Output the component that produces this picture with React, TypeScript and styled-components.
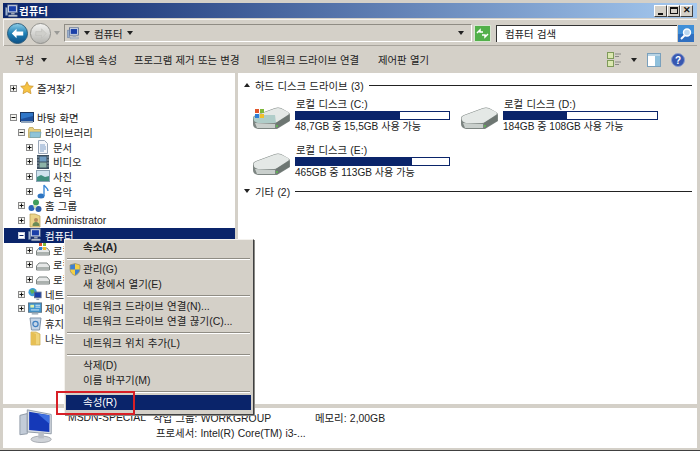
import React from 'react';
import styled, { createGlobalStyle } from 'styled-components';

const GlobalStyle = createGlobalStyle`
    html, body {
        margin: 0;
        padding: 0;
        background: #d4d0c8;
    }
    * {
        box-sizing: border-box;
    }
`;

const FONT = `"Liberation Sans", "Noto Sans CJK KR", sans-serif`;

/* ---------- icons ---------- */

const Expander = ({ open, dark }: { open?: boolean; dark?: boolean }) => (
    <svg width='7' height='7' viewBox='0 0 7 7'>
        <rect x='.5' y='.5' width='6' height='6' fill={dark ? '#fff' : '#f4f4f0'} stroke={dark ? '#c8cde0' : '#8a8a8a'} />
        <path d={open ? 'M1.5 3.5h4' : 'M1.5 3.5h4M3.500 1.500v4'} stroke={dark ? '#0a246a' : '#111'} />
    </svg>
);

const Monitor = ({ size = 16 }: { size?: number }) => (
    <svg width={size} height={size} viewBox='0 0 16 16'>
        <rect x='3' y='1' width='11' height='9' fill='#dfe6f2' stroke='#56688c' />
        <rect x='4.5' y='2.5' width='8' height='6' fill='#1a3fa8' />
        <path d='M7 10h4v2H7z' fill='#9aa6b8' />
        <path d='M4 12.5h10v2H4z' fill='#c3cbd8' stroke='#7d8799' strokeWidth='.5' />
        <path d='M.5 4h2.500v9H.5z' fill='#9db2d0' stroke='#58709a' strokeWidth='.6' />
    </svg>
);

const Star = () => (
    <svg width='14' height='14' viewBox='0 0 14 14'>
        <path d='M7 .8l1.900 4 4.400.5-3.200 3 .9 4.400L7 10.500l-4 2.200.9-4.400-3.200-3 4.400-.5z' fill='#f6c343' stroke='#c8912a' strokeWidth='.7' />
    </svg>
);

const Desktop = () => (
    <svg width='14' height='13' viewBox='0 0 14 13'>
        <rect x='.5' y='1.5' width='13' height='9' fill='#1d4f9c' stroke='#1b3560' />
        <path d='M1 2h12v3L1 8z' fill='#2f76c8' />
        <rect x='1' y='10' width='12' height='2' fill='#8fa3bb' />
    </svg>
);

const LibraryIcon = () => (
    <svg width='14' height='13' viewBox='0 0 14 13'>
        <path d='M.5 3.500v8h12v-8H6L5 1.500H1.500z' fill='#e8cf7e' stroke='#b39a4a' strokeWidth='.7' />
        <path d='M2 6h11l-1 5.500H2z' fill='#8fc4d8' stroke='#6a9db5' strokeWidth='.6' />
    </svg>
);

const DocIcon = () => (
    <svg width='12' height='14' viewBox='0 0 12 14'>
        <path d='M1.500.5h6l3 3v10h-9z' fill='#f4f6fa' stroke='#9aa7b8' />
        <path d='M3 5h5M3 7h6M3 9h6M3 11h4' stroke='#7f9fc9' />
    </svg>
);

const VideoIcon = () => (
    <svg width='12' height='14' viewBox='0 0 12 14'>
        <rect width='12' height='14' fill='#3d4f5f' />
        <rect x='2.5' y='1.5' width='7' height='5' fill='#6f9cc2' />
        <rect x='2.5' y='7.5' width='7' height='5' fill='#8db3a8' />
        <path d='M.5 2h1M.5 5h1M.5 8h1M.5 11h1M10.500 2h1M10.500 5h1M10.500 8h1M10.500 11h1' stroke='#dfe6ee' />
    </svg>
);

const PhotoIcon = () => (
    <svg width='14' height='12' viewBox='0 0 14 12'>
        <rect x='.5' y='.5' width='13' height='11' fill='#cfe3ef' stroke='#8ba3b5' />
        <path d='M1 7l4-2 4 2 4-1v5H1z' fill='#3f8f7f' />
    </svg>
);

const MusicIcon = () => (
    <svg width='12' height='15' viewBox='0 0 12 15'>
        <ellipse cx='4' cy='12' rx='3.5' ry='2.5' fill='#2e74c0' />
        <path d='M7 12V1c1 2 4 3 4 6' fill='none' stroke='#3e8ad8' strokeWidth='1.4' />
    </svg>
);

const HomeGroupIcon = () => (
    <svg width='14' height='14' viewBox='0 0 14 14'>
        <circle cx='8' cy='3.5' r='3' fill='#3f9e5c' />
        <circle cx='3.5' cy='9' r='3' fill='#2d66b8' />
        <circle cx='10.5' cy='10' r='3' fill='#2f5fa8' />
        <circle cx='7' cy='7.5' r='1.5' fill='#cfe3a8' />
    </svg>
);

const UserFolder = () => (
    <svg width='13' height='15' viewBox='0 0 13 15'>
        <path d='M1 1h5l5 2v11H1z' fill='#ecd48a' stroke='#b79c52' strokeWidth='.7' />
        <circle cx='7' cy='7' r='2' fill='#b88a5e' />
        <path d='M3.500 13c0-3 1.500-4 3.500-4s3.500 1 3.500 4z' fill='#6b8a56' />
    </svg>
);

const WinFlag = ({ x, y, s }: { x: number; y: number; s: number }) => (
    <g>
        <rect x={x} y={y} width={s} height={s} fill='#e2552b' />
        <rect x={x + s + 1} y={y} width={s} height={s} fill='#7fb83a' />
        <rect x={x} y={y + s + 1} width={s} height={s} fill='#2f7fd6' />
        <rect x={x + s + 1} y={y + s + 1} width={s} height={s} fill='#f0c02c' />
    </g>
);

const Drive = ({ windows }: { windows?: boolean }) => (
    <svg width='42' height='27' viewBox='0 0 42 27'>
        {/* top face, front face, dark right end */}
        <path d='M3 15 Q3 13 6 12 L25 5 Q28 4 31 5 L38 9 Q40 10 40 12 L40 18 L27 26 L8 26 Q3 25 3 21z' fill='#7d8582' />
        <path d='M3.500 15 Q3.500 13.500 6 12.500 L25 5.500 Q28 4.500 31 5.500 L38 9 Q39.500 10 38.500 11.500 L27 19 Q26 20 24 20 L8 20 Q3.500 19 3.500 15z' fill='#e4e8e6' />
        <path d='M5 20 L25 21 L25 25 L7 25z' fill='#c9cfcc' />
        <path d='M26 20 L39 12 L39 18 L27 25z' fill='#6d7672' />
        <circle cx='27' cy='23' r='1' fill='#5ac24a' />
        {windows && (
            <g>
                <path d='M3 15 Q3 13 6 12 L25 12 L26 20 L8 20 Q3 19 3 15z' fill='#4f9a93' opacity='.35' />
                <WinFlag x={5} y={6} s={4} />
            </g>
        )}
    </svg>
);

const SmallDrive = ({ windows }: { windows?: boolean }) => (
    <svg width='14' height='14' viewBox='0 0 14 14'>
        <path d='M.5 8L3 5h8l2.500 3v4h-13z' fill='#e6e8e8' stroke='#7d8482' />
        <path d='M1 9h12v2.500H1z' fill='#aab1ae' />
        {windows && <WinFlag x={3} y={0} s={3} />}
    </svg>
);

const NetworkIcon = () => (
    <svg width='15' height='14' viewBox='0 0 15 14'>
        <circle cx='5' cy='5' r='4.5' fill='#3f9ed6' />
        <path d='M2 3l4-1 1 3-3 2z' fill='#5db05a' />
        <rect x='7' y='5' width='7' height='6' fill='#1a3fa8' stroke='#56688c' />
        <path d='M9 12h3v1.500H9z' fill='#8b97aa' />
    </svg>
);

const ControlPanelIcon = () => (
    <svg width='15' height='14' viewBox='0 0 15 14'>
        <rect x='.5' y='.5' width='14' height='10' fill='#3f95d0' stroke='#5a7488' />
        <rect x='2.5' y='2.5' width='4' height='3' fill='#dff0a8' />
        <path d='M8 3h5M8 5h5M3 8h9' stroke='#dfeef8' />
        <rect x='4' y='11' width='7' height='2' fill='#a5b3c0' />
    </svg>
);

const RecycleIcon = () => (
    <svg width='13' height='15' viewBox='0 0 13 15'>
        <path d='M1 2h11l-1.500 12h-8z' fill='#c6d6e8' stroke='#7f93aa' />
        <circle cx='6.5' cy='8' r='2.6' fill='none' stroke='#3f7fc0' strokeWidth='1.2' />
    </svg>
);

const FolderIcon = () => (
    <svg width='11' height='15' viewBox='0 0 11 15'>
        <path d='M1 1h5l4 2v11H1z' fill='#f0d47a' stroke='#c5a548' strokeWidth='.7' />
        <path d='M1 1l5 2v11H1z' fill='#e6bf55' />
    </svg>
);

const BackIcon = () => (
    <svg width='21' height='21' viewBox='0 0 22 22'>
        <defs>
            <linearGradient id='backFill' x1='0' y1='0' x2='0' y2='1'>
                <stop offset='0' stopColor='#8fd0ea' />
                <stop offset='.5' stopColor='#1f7fb4' />
                <stop offset='1' stopColor='#0c4f86' />
            </linearGradient>
        </defs>
        <circle cx='11' cy='11' r='10.5' fill='url(#backFill)' stroke='#2c5a78' />
        <path d='M5 11l5-5v3h7v4h-7v3z' fill='#fff' />
    </svg>
);

const ForwardIcon = () => (
    <svg width='21' height='21' viewBox='0 0 22 22'>
        <defs>
            <linearGradient id='fwdFill' x1='0' y1='0' x2='0' y2='1'>
                <stop offset='0' stopColor='#f4f4f2' />
                <stop offset='1' stopColor='#b4b4b0' />
            </linearGradient>
        </defs>
        <circle cx='11' cy='11' r='10.5' fill='url(#fwdFill)' stroke='#8f8f8b' />
        <path d='M17 11l-5-5v3H6v4h6v3z' fill='#cfcfcb' stroke='#b9b9b5' strokeWidth='.5' />
    </svg>
);

const Caret = ({ color = '#222', up }: { color?: string; up?: boolean }) => (
    <svg width='6' height='4' viewBox='0 0 6 4'>
        <path d={up ? 'M0 4h6L3 0z' : 'M0 0h6L3 4z'} fill={color} />
    </svg>
);

const RefreshIcon = () => (
    <svg width='17' height='17' viewBox='0 0 17 17'>
        <rect x='.5' y='.5' width='16' height='16' fill='#52b04a' stroke='#d7e6d0' />
        <path d='M3 8l3-3v2h3M14 9l-3 3v-2H8' fill='none' stroke='#fff' strokeWidth='1.5' />
    </svg>
);

const SearchIcon = () => (
    <svg width='16' height='17' viewBox='0 0 16 17'>
        <rect width='16' height='17' fill='#3f8fd8' />
        <rect y='9' width='16' height='8' fill='#2f6fc0' />
        <circle cx='9' cy='7.5' r='3.5' fill='#bcd8f0' stroke='#fff' strokeWidth='1.4' />
        <path d='M6.500 10.500L3 14' stroke='#fff' strokeWidth='2' />
    </svg>
);

const ViewsIcon = () => (
    <svg width='14' height='15' viewBox='0 0 14 15'>
        <rect x='.5' y='.5' width='6' height='6' fill='#dbe8b0' stroke='#7e9a5a' />
        <rect x='.5' y='8.5' width='6' height='6' fill='#dbe8b0' stroke='#7e9a5a' />
        <path d='M8 2h6M8 4.500h4M8 10h6M8 12.500h4' stroke='#8a8a86' />
    </svg>
);

const PaneIcon = () => (
    <svg width='14' height='14' viewBox='0 0 14 14'>
        <rect x='.5' y='.5' width='13' height='13' fill='#fff' stroke='#7aa0bc' />
        <rect x='8' y='1' width='5' height='12' fill='#8fc0dc' />
        <rect x='1' y='1' width='12' height='2' fill='#b7d3e4' />
    </svg>
);

const HelpIcon = () => (
    <svg width='14' height='14' viewBox='0 0 14 14'>
        <circle cx='7' cy='7' r='6.5' fill='#3757b0' stroke='#8a9ccc' />
        <text x='7' y='10.5' textAnchor='middle' fontSize='10' fontWeight='700' fontFamily='Liberation Sans' fill='#fff'>?</text>
    </svg>
);

const ShieldIcon = () => (
    <svg width='12' height='13' viewBox='0 0 12 13'>
        <path d='M6 .5l5 1.500v4c0 3-2 5.500-5 6.500-3-1-5-3.500-5-6.500V2z' fill='#f3cf45' stroke='#8a7f5a' strokeWidth='.6' />
        <path d='M6 1v5.500H1.200V2zM6 6.500h4.800C10.500 9 8.500 11.300 6 12.300z' fill='#3f7fd0' />
    </svg>
);

const PcIcon = () => (
    <svg width='35' height='35' viewBox='0 0 38 38'>
        <path d='M1 8l8-2v22l-8 1z' fill='#c3ccd8' stroke='#8d97a5' />
        <path d='M9 2l26 5v21L9 26z' fill='#d8dde4' stroke='#8d97a5' />
        <path d='M11 4l22 4v18L11 24z' fill='#1539b8' />
        <path d='M20 6l13 2v9z' fill='#3d6fe0' />
        <ellipse cx='24' cy='34' rx='11' ry='3.5' fill='#cfd3d8' stroke='#a3a8ae' />
        <path d='M21 26h6v7h-6z' fill='#b9bec5' />
    </svg>
);

/* ---------- data ---------- */

interface TreeNode {
    label: string;
    depth: number;
    icon: React.ReactNode;
    toggle?: 'open' | 'closed';
    selected?: boolean;
}

const TREE: TreeNode[] = [
    { label: '바탕 화면', depth: 0, icon: <Desktop />, toggle: 'open' },
    { label: '라이브러리', depth: 1, icon: <LibraryIcon />, toggle: 'open' },
    { label: '문서', depth: 2, icon: <DocIcon />, toggle: 'closed' },
    { label: '비디오', depth: 2, icon: <VideoIcon />, toggle: 'closed' },
    { label: '사진', depth: 2, icon: <PhotoIcon />, toggle: 'closed' },
    { label: '음악', depth: 2, icon: <MusicIcon />, toggle: 'closed' },
    { label: '홈 그룹', depth: 1, icon: <HomeGroupIcon />, toggle: 'closed' },
    { label: 'Administrator', depth: 1, icon: <UserFolder />, toggle: 'closed' },
    { label: '컴퓨터', depth: 1, icon: <Monitor />, toggle: 'open', selected: true },
    { label: '로컬 디스크 (C:)', depth: 2, icon: <SmallDrive windows />, toggle: 'closed' },
    { label: '로컬 디스크 (D:)', depth: 2, icon: <SmallDrive />, toggle: 'closed' },
    { label: '로컬 디스크 (E:)', depth: 2, icon: <SmallDrive />, toggle: 'closed' },
    { label: '네트워크', depth: 1, icon: <NetworkIcon />, toggle: 'closed' },
    { label: '제어판', depth: 1, icon: <ControlPanelIcon />, toggle: 'closed' },
    { label: '휴지통', depth: 1, icon: <RecycleIcon /> },
    { label: '나는', depth: 1, icon: <FolderIcon /> },
];

const DRIVES = [
    { name: '로컬 디스크 (C:)', used: 68, free: '48,7GB 중 15,5GB 사용 가능', windows: true },
    { name: '로컬 디스크 (D:)', used: 41, free: '184GB 중 108GB 사용 가능', windows: false },
    { name: '로컬 디스크 (E:)', used: 76, free: '465GB 중 113GB 사용 가능', windows: false },
];

/* ---------- page ---------- */

export default function App() {
    return (
        <Window>
            <GlobalStyle />
            <TitleBar>
                <Monitor size={14} />
                <TitleText>컴퓨터</TitleText>
                <WindowButtons>
                    <WindowButton><Glyph $kind='min' /></WindowButton>
                    <WindowButton><Glyph $kind='max' /></WindowButton>
                    <WindowButton><CloseGlyph>✕</CloseGlyph></WindowButton>
                </WindowButtons>
            </TitleBar>

            <AddressRow>
                <NavButtons>
                    <BackIcon />
                    <ForwardIcon />
                    <NavCaret><Caret color='#9a9a96' /></NavCaret>
                </NavButtons>
                <AddressField>
                    <Monitor size={13} />
                    <Caret />
                    <span>컴퓨터</span>
                    <Caret />
                    <AddressEnd><Caret /></AddressEnd>
                </AddressField>
                <RefreshIcon />
                <SearchBox>
                    <SearchInput>컴퓨터 검색</SearchInput>
                    <SearchIcon />
                </SearchBox>
            </AddressRow>

            <CommandBar>
                <Command $width={51}>구성 <Caret /></Command>
                <Command $width={68}>시스템 속성</Command>
                <Command $width={123}>프로그램 제거 또는 변경</Command>
                <Command $width={121}>네트워크 드라이브 연결</Command>
                <Command $width={70}>제어판 열기</Command>
                <CommandTools>
                    <ViewsIcon />
                    <Caret />
                    <PaneIcon />
                    <HelpIcon />
                </CommandTools>
            </CommandBar>

            <Body>
                <NavPane>
                    <TreeRow $depth={0} $gapAfter>
                        <ToggleSlot><Expander /></ToggleSlot>
                        <TreeIcon><Star /></TreeIcon>
                        <TreeLabel>즐겨찾기</TreeLabel>
                    </TreeRow>
                    {TREE.map((node) => (
                        <TreeRow key={node.label} $depth={node.depth} $selected={node.selected}>
                            <ToggleSlot>
                                {node.toggle && <Expander open={node.toggle === 'open'} dark={node.selected} />}
                            </ToggleSlot>
                            <TreeIcon>{node.icon}</TreeIcon>
                            <TreeLabel>{node.label}</TreeLabel>
                        </TreeRow>
                    ))}
                </NavPane>
                <Splitter />
                <Content>
                    <GroupHeader>
                        <Caret up />
                        <span>하드 디스크 드라이브 (3)</span>
                        <GroupLine />
                    </GroupHeader>
                    <DriveGrid>
                        {DRIVES.map((drive) => (
                            <DriveItem key={drive.name}>
                                <DriveIcon><Drive windows={drive.windows} /></DriveIcon>
                                <DriveInfo>
                                    <DriveName>{drive.name}</DriveName>
                                    <UsageBar>
                                        <UsageFill style={{ width: `${drive.used}%` }} />
                                    </UsageBar>
                                    <DriveFree>{drive.free}</DriveFree>
                                </DriveInfo>
                            </DriveItem>
                        ))}
                    </DriveGrid>
                    <GroupHeader $tight>
                        <Caret />
                        <span>기타 (2)</span>
                        <GroupLine />
                    </GroupHeader>
                </Content>
            </Body>

            <DetailsPane>
                <PcIcon />
                <DetailsGrid>
                    <span>MSDN-SPECIAL</span>
                    <span>작업 그룹: WORKGROUP</span>
                    <span>메모리: 2,00GB</span>
                    <span />
                    <ProcessorText>프로세서: Intel(R) Core(TM) i3-...</ProcessorText>
                </DetailsGrid>
            </DetailsPane>

            <ContextMenu>
                <MenuItem $bold>속소(A)</MenuItem>
                <MenuSeparator />
                <MenuItem>
                    <MenuIcon><ShieldIcon /></MenuIcon>
                    관리(G)
                </MenuItem>
                <MenuItem>새 창에서 열기(E)</MenuItem>
                <MenuSeparator />
                <MenuItem>네트워크 드라이브 연결(N)...</MenuItem>
                <MenuItem>네트워크 드라이브 연결 끊기(C)...</MenuItem>
                <MenuSeparator />
                <MenuItem>네트워크 위치 추가(L)</MenuItem>
                <MenuSeparator />
                <MenuItem>삭제(D)</MenuItem>
                <MenuItem>이름 바꾸기(M)</MenuItem>
                <MenuSeparator />
                <MenuItem $active>속성(R)</MenuItem>
            </ContextMenu>
            <Highlight />
        </Window>
    );
}

/* ---------- styles ---------- */

const Window = styled.div`
    position: relative;
    width: 700px;
    height: 451px;
    display: flex;
    flex-direction: column;
    padding: 3px 3px 2px;
    overflow: hidden;
    background: #d4d0c8;
    border-bottom: 1px solid #404040;
    font-family: ${FONT};
    font-size: 10.4px;
    word-spacing: 0.4px;
    color: #222;
`;

const TitleBar = styled.div`
    height: 15px;
    flex: none;
    display: flex;
    align-items: center;
    padding: 0 4px 0 2px;
    background: linear-gradient(90deg, #0a246a, #a6caf0);
`;

const TitleText = styled.span`
    color: #fff;
    font-weight: 700;
    font-size: 10.5px;
`;

const WindowButtons = styled.div`
    margin-left: auto;
    display: flex;
`;

const WindowButton = styled.div`
    width: 13px;
    height: 12px;
    display: flex;
    align-items: center;
    justify-content: center;
    background: #d4d0c8;
    border: 1px solid;
    border-color: #fff #404040 #404040 #fff;
`;

const Glyph = styled.div<{ $kind: 'min' | 'max' }>`
    width: ${({ $kind }) => ($kind === 'min' ? '5px' : '8px')};
    height: ${({ $kind }) => ($kind === 'min' ? '2px' : '7px')};
    background: ${({ $kind }) => ($kind === 'min' ? '#111' : 'transparent')};
    border: ${({ $kind }) => ($kind === 'max' ? '1px solid #111' : 'none')};
    border-top-width: ${({ $kind }) => ($kind === 'max' ? '2px' : '0')};
    align-self: ${({ $kind }) => ($kind === 'min' ? 'flex-end' : 'center')};
    margin-bottom: ${({ $kind }) => ($kind === 'min' ? '1px' : '0')};
`;

const CloseGlyph = styled.span`
    font-size: 9px;
    line-height: 1;
    font-weight: 700;
    color: #111;
`;

const AddressRow = styled.div`
    height: 27px;
    flex: none;
    display: flex;
    align-items: center;
    margin-top: 1px;
    padding: 0 3px 0 3px;
    border-top: 1px solid #f4f2ee;
    border-left: 1px solid #f4f2ee;
    box-shadow: inset 0 -1px 0 #a8a49c;
`;

const NavButtons = styled.div`
    width: 57px;
    flex: none;
    display: flex;
    align-items: center;
    gap: 2px;
`;

const NavCaret = styled.div`
    display: flex;
    margin-left: 1px;
`;

const AddressField = styled.div`
    width: 408px;
    height: 18px;
    flex: none;
    display: flex;
    align-items: center;
    gap: 4px;
    padding: 0 7px 0 2px;
    margin-right: 2px;
    border-top: 1px solid #8f8c84;
    border-left: 1px solid #8f8c84;
    border-bottom: 1px solid #fff;
    border-right: 1px solid #fff;
`;

const AddressEnd = styled.div`
    margin-left: auto;
    display: flex;
`;

const SearchBox = styled.div`
    flex: 1;
    display: flex;
    align-items: center;
    gap: 1px;
    margin-left: 5px;
`;

const SearchInput = styled.div`
    flex: 1;
    height: 17px;
    padding: 2px 0 0 8px;
    background: #fff;
    border-top: 1px solid #333;
    border-left: 1px solid #333;
    line-height: 13px;
`;

const CommandBar = styled.div`
    height: 27px;
    flex: none;
    display: flex;
    align-items: center;
    padding-left: 12px;
    padding-right: 12px;
`;

const Command = styled.div<{ $width: number }>`
    width: ${({ $width }) => $width}px;
    flex: none;
    display: flex;
    align-items: center;
    gap: 7px;
`;

const CommandTools = styled.div`
    margin-left: auto;
    display: flex;
    align-items: center;
    gap: 10px;
`;

const Body = styled.div`
    flex: 1;
    min-height: 0;
    display: flex;
`;

const NavPane = styled.div`
    width: 232px;
    flex: none;
    padding-top: 8px;
    background: #fff;
    overflow: hidden;
`;

const TreeRow = styled.div<{ $depth: number; $selected?: boolean; $gapAfter?: boolean }>`
    height: 14.73px;
    display: flex;
    align-items: center;
    gap: 2px;
    padding-left: ${({ $depth, $selected }) => 7 + $depth * 8 - ($selected ? 1 : 0)}px;
    margin-bottom: ${({ $gapAfter }) => ($gapAfter ? '14.5px' : '0')};
    margin-left: ${({ $selected }) => ($selected ? '1px' : '0')};
    background: ${({ $selected }) => ($selected ? '#0a246a' : 'transparent')};
    color: ${({ $selected }) => ($selected ? '#fff' : '#222')};
`;

const ToggleSlot = styled.div`
    width: 8px;
    flex: none;
    display: flex;
`;

const TreeIcon = styled.div`
    width: 14px;
    flex: none;
    display: flex;
    justify-content: center;
`;

const TreeLabel = styled.span`
    margin-left: 1px;
    white-space: nowrap;
`;

const Splitter = styled.div`
    width: 3px;
    flex: none;
`;

const Content = styled.div`
    flex: 1;
    min-width: 0;
    padding: 5px 5px 0 6px;
    background: #fff;
`;

const GroupHeader = styled.div<{ $tight?: boolean }>`
    height: 14px;
    display: flex;
    align-items: center;
    gap: 5px;
    margin-top: ${({ $tight }) => ($tight ? '4px' : '0')};
`;

const GroupLine = styled.div`
    flex: 1;
    height: 1px;
    background: #222;
`;

const DriveGrid = styled.div`
    display: grid;
    grid-template-columns: 208px 208px;
    margin-top: 4px;
    row-gap: 8px;
`;

const DriveItem = styled.div`
    display: flex;
    align-items: center;
    gap: 3px;
    height: 38px;
    padding-left: 6px;
`;

const DriveIcon = styled.div`
    flex: none;
    display: flex;
    align-self: flex-start;
    margin-top: 7px;
`;

const DriveInfo = styled.div`
    width: 155px;
    flex: none;
`;

const DriveName = styled.div`
    height: 13px;
    line-height: 13px;
    padding-left: 1px;
`;

const UsageBar = styled.div`
    height: 9px;
    background: #fff;
    border: 1px solid #0a246a;
`;

const UsageFill = styled.div`
    height: 100%;
    background: #0a246a;
`;

const DriveFree = styled.div`
    height: 13px;
    line-height: 13px;
    font-size: 10.1px;
    word-spacing: 0;
`;

const DetailsPane = styled.div`
    height: 40px;
    flex: none;
    margin-top: 4px;
    display: flex;
    gap: 14px;
    padding-left: 16px;
    background: #fff;
`;

const DetailsGrid = styled.div`
    display: grid;
    grid-template-columns: 85px 162px auto;
    grid-auto-rows: 15px;
    align-items: center;
    padding-top: 2px;
`;

const ProcessorText = styled.span`
    padding-left: 3px;
    white-space: nowrap;
    grid-column: 2 / 4;
`;

const ContextMenu = styled.div`
    position: absolute;
    left: 64px;
    top: 239px;
    width: 190px;
    padding: 0 2px 4px 1px;
    display: flex;
    flex-direction: column;
    background: #d4d0c8;
    border: 1px solid;
    border-color: #f4f2ee #404040 #404040 #f4f2ee;
    box-shadow: 1px 1px 0 #8a8a86;
`;

const MenuItem = styled.div<{ $bold?: boolean; $active?: boolean }>`
    position: relative;
    height: 15px;
    flex: none;
    line-height: 15px;
    padding-left: 17px;
    white-space: nowrap;
    font-size: 10.5px;
    word-spacing: 0.5px;
    font-weight: ${({ $bold }) => ($bold ? 700 : 400)};
    background: ${({ $active }) => ($active ? '#0a246a' : 'transparent')};
    color: ${({ $active }) => ($active ? '#fff' : '#222')};
`;

const MenuIcon = styled.span`
    position: absolute;
    left: 3px;
    top: 1px;
    display: flex;
`;

const MenuSeparator = styled.div`
    height: 2px;
    flex: none;
    margin: 3px 1px 2px;
    border-top: 1px solid #8f8c84;
    border-bottom: 1px solid #fff;
`;

const Highlight = styled.div`
    position: absolute;
    left: 56px;
    top: 391px;
    width: 79px;
    height: 24px;
    border: 2px solid #d81f26;
`;
